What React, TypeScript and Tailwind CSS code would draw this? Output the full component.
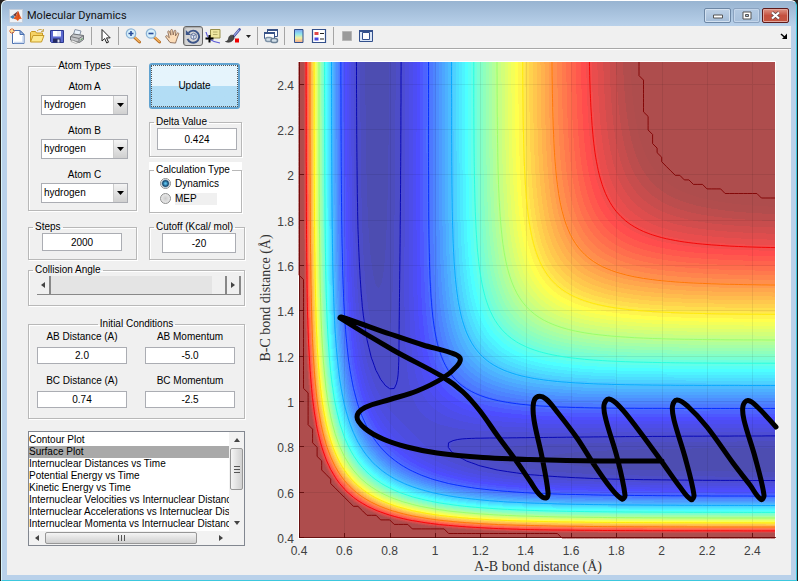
import React, { useMemo, useState } from 'react';

/* ---------- potential energy surface ---------- */

const DEPTH = 103.9;
const BETA = 1.96;
const R_EQ = 0.742;
const SATO = 0.182;
const CUTOFF = -21;
const FLOOR = -104;

const MIN = 0.4;
const MAX = 2.5;
const LEFT = 299;
const TOP = 62;
const SIZE = 476;

const terms = (r: number) => {
  const e = Math.exp(-BETA * (r - R_EQ));
  const q = (DEPTH / 4) * ((3 + SATO) * e * e - (2 + 6 * SATO) * e);
  const j = (DEPTH / 4) * ((1 + 3 * SATO) * e * e - (6 + 2 * SATO) * e);
  return [q, j];
};

// LEPS energy of the collinear system, clipped at the cutoff
const energy = (ab: number, bc: number) => {
  const [q1, j1] = terms(ab);
  const [q2, j2] = terms(bc);
  const [q3, j3] = terms(ab + bc);
  const root = Math.sqrt(0.5 * ((j1 - j2) ** 2 + (j2 - j3) ** 2 + (j3 - j1) ** 2));
  return Math.min(CUTOFF, (q1 + q2 + q3 - root) / (1 + SATO));
};

const clamp = (v: number) => Math.max(0, Math.min(1, v));

const jet = (t: number, alpha: number) => {
  const mix = (v: number) => Math.round(255 * (clamp(v) * alpha + 1 - alpha));
  const r = mix(1.5 - Math.abs(4 * t - 3));
  const g = mix(1.5 - Math.abs(4 * t - 2));
  const b = mix(1.5 - Math.abs(4 * t - 1));
  return `rgb(${r},${g},${b})`;
};

const SHADES = 64;

const px = (v: number) => LEFT + ((v - MIN) / (MAX - MIN)) * SIZE;
const py = (v: number) => TOP + SIZE - ((v - MIN) / (MAX - MIN)) * SIZE;

// one path per shade, made of horizontal runs
const buildSurface = () => {
  const paths: string[] = Array(SHADES).fill('');
  const step = (MAX - MIN) / SIZE;
  for (let row = 0; row < SIZE; row++) {
    const bc = MAX - (row + 0.5) * step;
    let start = 0;
    let current = -1;
    for (let col = 0; col <= SIZE; col++) {
      let shade = -2;
      if (col < SIZE) {
        const t = (energy(MIN + (col + 0.5) * step, bc) - FLOOR) / (CUTOFF - FLOOR);
        shade = Math.max(0, Math.min(SHADES - 1, Math.floor(t * SHADES)));
      }
      if (shade !== current) {
        if (current >= 0) paths[current] += `M${LEFT + start} ${TOP + row}h${col - start}v1h${start - col}z`;
        start = col;
        current = shade;
      }
    }
  }
  return paths;
};

const LEVELS = [-100, -90.2, -80.2, -70.3, -60.4, -50.5, -40.7, -30.6, CUTOFF];

// marching squares on a 0.02 grid
const buildContour = (level: number) => {
  const n = 105;
  const at = (i: number) => MIN + i * 0.02;
  const grid = Array.from({ length: n + 1 }, (_, i) =>
    Array.from({ length: n + 1 }, (_, k) => energy(at(i), at(k)))
  );
  let d = '';
  for (let i = 0; i < n; i++) {
    for (let k = 0; k < n; k++) {
      const corners = [[i, k], [i + 1, k], [i + 1, k + 1], [i, k + 1]];
      const hits: string[] = [];
      corners.forEach(([ax, ay], c) => {
        const [bx, by] = corners[(c + 1) % 4];
        const a = grid[ax][ay];
        const b = grid[bx][by];
        if (a >= level !== b >= level) {
          const t = (level - a) / (b - a);
          hits.push(`${px(at(ax + (bx - ax) * t)).toFixed(1)} ${py(at(ay + (by - ay) * t)).toFixed(1)}`);
        }
      });
      for (let h = 0; h + 1 < hits.length; h += 2) d += `M${hits[h]}L${hits[h + 1]}`;
    }
  }
  return d;
};

const TRAJECTORY = [
  [662, 461], [600, 461], [530, 459.5], [483, 457.5], [437, 453], [407, 447], [383, 439], [365, 428.5],
  [357, 417], [365, 407.5], [390, 399.5], [417, 391], [443, 378], [457, 366], [460, 358], [450, 352.5],
  [423, 345], [390, 334], [341, 317], [340, 318], [393, 350], [443, 377], [463, 392], [480, 411],
  [497, 435], [517, 462], [530, 481], [539, 494], [546, 498], [548, 492], [542, 457], [534, 420],
  [533.5, 403], [538, 396.5], [546, 399], [558, 413], [577, 438], [593, 463], [610, 487], [622, 499],
  [625, 495], [617, 457], [606, 420], [604, 405], [609, 399], [620, 407], [637, 428], [662, 462],
  [680, 487], [691, 499.5], [694, 495], [685, 457], [674, 420], [672.5, 406], [677, 400], [688, 406.5],
  [707, 427], [733, 463], [750, 485], [761, 499.5], [764, 495], [755, 457], [744, 420], [743, 406],
  [748, 400.5], [758, 407.5], [776, 427]
];

const smooth = (pts: number[][]) => {
  let d = `M${pts[0][0]} ${pts[0][1]}`;
  for (let i = 0; i < pts.length - 1; i++) {
    const p0 = pts[i - 1] || pts[i];
    const p1 = pts[i];
    const p2 = pts[i + 1];
    const p3 = pts[i + 2] || p2;
    const len = Math.hypot(p2[0] - p1[0], p2[1] - p1[1]);
    const tangent = (a: number[], b: number[]) => {
      const l = Math.hypot(b[0] - a[0], b[1] - a[1]) || 1;
      return [((b[0] - a[0]) / l) * len / 3, ((b[1] - a[1]) / l) * len / 3];
    };
    const t1 = tangent(p0, p2);
    const t2 = tangent(p1, p3);
    d += `C${p1[0] + t1[0]} ${p1[1] + t1[1]} ${p2[0] - t2[0]} ${p2[1] - t2[1]} ${p2[0]} ${p2[1]}`;
  }
  return d;
};

const TICKS = [0.4, 0.6, 0.8, 1, 1.2, 1.4, 1.6, 1.8, 2, 2.2, 2.4];

const SurfacePlot = () => {
  const surface = useMemo(buildSurface, []);
  const contours = useMemo(() => LEVELS.map(buildContour), []);
  const track = useMemo(() => smooth(TRAJECTORY), []);

  return (
    <svg viewBox="253 49 538 526" className="block w-full h-auto" role="img" aria-label="Surface Plot">
      <rect x={LEFT - 1} y={TOP - 1} width={SIZE + 2} height={SIZE + 2} fill="#fff" />
      <g shapeRendering="crispEdges">
        {surface.map((d, i) => (
          <path key={i} d={d} fill={jet(Math.min(0.988, (i + 1) / SHADES), 0.7)} />
        ))}
        {TICKS.map((t) => (
          <path
            key={t}
            d={`M${Math.round(px(t)) + 0.5} ${TOP}v${SIZE}M${LEFT} ${Math.round(py(t)) - 0.5}h${SIZE}`}
            stroke="#000"
            strokeOpacity="0.07"
          />
        ))}
        <path d={`M${LEFT + 0.5} ${TOP}v${SIZE - 0.5}h${SIZE}`} fill="none" stroke="#500" strokeOpacity="0.75" />
        {TICKS.map((t) => (
          <path
            key={t}
            d={`M${Math.round(px(t)) + 0.5} ${TOP + SIZE}v-5M${LEFT} ${Math.round(py(t)) - 0.5}h5`}
            stroke="#500"
            strokeOpacity="0.75"
          />
        ))}
      </g>
      {contours.map((d, i) => (
        <path
          key={i}
          d={d}
          fill="none"
          stroke={jet((LEVELS[i] - FLOOR) / (CUTOFF - FLOOR), 1)}
          strokeOpacity="0.9"
          strokeWidth="1"
        />
      ))}
      <path d={track} fill="none" stroke="#000" strokeWidth="5" strokeLinejoin="round" strokeLinecap="round" />
      <g className="font-['Liberation_Sans',sans-serif] text-[12px]" fill="#404040">
        {TICKS.map((t) => (
          <React.Fragment key={t}>
            <text x={px(t)} y="555" textAnchor="middle">{t}</text>
            <text x="294" y={py(t) + 5} textAnchor="end">{t}</text>
          </React.Fragment>
        ))}
      </g>
      <g className="font-['Liberation_Serif',serif] text-[14px]" fill="#333" textAnchor="middle">
        <text x="538" y="571">A-B bond distance (Å)</text>
        <text transform="translate(270 298) rotate(-90)">B-C bond distance (Å)</text>
      </g>
    </svg>
  );
};

/* ---------- toolbar ---------- */

const Lens = ({ plus }: { plus?: boolean }) => (
  <>
    <path d="M9.500 9.500l5 4.500" stroke="#b8702a" strokeWidth="3" strokeLinecap="round" />
    <path d="M9.800 9.300l4.500 4.200" stroke="#f6b35c" strokeWidth="1.500" strokeLinecap="round" />
    <circle cx="6" cy="5.500" r="4.700" fill="#d8f0fb" stroke="#8db4d6" strokeWidth="1.300" />
    <path d={plus ? 'M3.500 5.500h5M6 3v5' : 'M3.500 5.500h5'} stroke="#2a4d9a" strokeWidth="1.600" />
  </>
);

const icons: Record<string, React.ReactNode> = {
  new: (
    <>
      <path d="M3.500 2.500h7.500l4 4v9h-11.500z" fill="#fff" stroke="#4a6fae" />
      <path d="M5 14.500h9V8" fill="none" stroke="#c9d9f2" strokeWidth="1.500" />
      <path d="M11 2.500v4h4z" fill="#9db9e4" stroke="#4a6fae" />
      <path d="M3 0v6M0 3h6M1 1l4 4M5 1l-4 4" stroke="#d9682c" />
      <circle cx="3" cy="3" r="1.300" fill="#ffe08a" />
    </>
  ),
  open: (
    <>
      <path d="M1.500 13.500v-9l1-1h4l1 1.500h6v3" fill="#f6d365" stroke="#c79a26" />
      <path d="M8 3c2-2 4-2 6-.5M14.500 1v2.500h-2.500" fill="none" stroke="#c8a95a" />
      <path d="M1.500 14l2.500-6.500h11l-2.500 6.500z" fill="#fde98f" stroke="#c79a26" />
    </>
  ),
  save: (
    <>
      <path d="M1.500 2.500h13v12h-12l-1-1z" fill="#5a68cf" stroke="#2c388f" />
      <path d="M4 3h8v5.500h-8z" fill="#e6ebfb" />
      <path d="M4 3h4v5h-4z" fill="#fff" />
      <path d="M4 10.500h7.500v4h-7.500z" fill="#23295f" />
      <path d="M8.500 11.500h2v3h-2z" fill="#dfe3f5" />
    </>
  ),
  print: (
    <>
      <path d="M6 1.500l6 1.500-1.500 5-6-1.500z" fill="#e9f2fc" stroke="#8794a6" />
      <path d="M1.500 8.500l3-2.500 10 1.500v4l-4 3-9-2.500z" fill="#c3c5c8" stroke="#6c7074" />
      <path d="M1.500 8.500l8.500 2v4M10 10.500l4.500-3" fill="none" stroke="#77797c" />
      <path d="M3 12l6 2.500-2 1-5-2z" fill="#f7f7f7" stroke="#888" strokeWidth=".6" />
      <path d="M11.500 12l2-1.500" stroke="#4fa34a" />
    </>
  ),
  pointer: (
    <path d="M5 1.500v11.500l2.700-2.500 2 4.500 1.800-.8-2-4.300h3.700z" fill="#fff" stroke="#222" />
  ),
  zoomIn: <Lens plus />,
  zoomOut: <Lens />,
  hand: (
    <path
      d="M5 14.500l-4.200-5.500c-.6-1.200.8-1.800 1.700-.9l1.800 1.700-1.500-5.800c-.2-1.300 1.400-1.500 1.800-.3l1.300 3.500-.2-4.700c0-1.300 1.700-1.400 1.900-.1l.6 4.600 1-4c.4-1.200 1.900-.8 1.700.4l-.5 4.600 1.700-2.700c.7-1 2-.3 1.600.8l-1.900 5-1.300 4z"
      fill="#fbdcb8"
      stroke="#8a6a55"
      strokeWidth=".9"
    />
  ),
  rotate: (
    <>
      <path d="M3.500 4.800a6 6 0 1 1-1 6" fill="none" stroke="#3b5488" strokeWidth="1.900" />
      <path d="M.8 2v5h5z" fill="#3b5488" />
      <path d="M6 6.500l2.500-1.300 2.700 1.300v3.500l-2.700 1.500-2.500-1.500zM6 6.500l2.700 1.200 2.500-1.200M8.700 7.700v3.500" fill="#e8edf8" stroke="#5a6f9c" strokeWidth=".9" />
    </>
  ),
  cursor: (
    <>
      <path d="M1 4c1 6 6 10 14 11" fill="none" stroke="#5a5ad8" strokeWidth="1.200" />
      <path d="M5.500 1.500h9.500v8.500h-9.500z" fill="#efe7a0" stroke="#98904c" />
      <path d="M8 4h4.500M8 6.500h4.500" stroke="#b5ad6a" />
      <path d="M.5 10.500h8M4.500 7v7.500" stroke="#000" strokeWidth="2" />
    </>
  ),
  brush: (
    <>
      <path d="M14.500 1.500l-6 7" stroke="#3e4a9c" strokeWidth="2.600" strokeLinecap="round" />
      <path d="M14.300 1.600l-5.500 6.400" stroke="#a9b2ec" strokeWidth="1.100" />
      <path d="M8.500 7.500c-3-1-4.500.5-5 3-.3 2-1.500 3-3 3 3 1.500 7 .5 8.500-3z" fill="#4c4c4c" stroke="#222" strokeWidth=".6" />
      <path d="M10 10.500h4v4h-4z" fill="#f00000" />
    </>
  ),
  link: (
    <>
      <path d="M4.500 1.500h10v7h-10z" fill="#fff" stroke="#3a5488" />
      <path d="M4 2h11" stroke="#3a5488" strokeWidth="2" />
      <path d="M1.500 4.500h10v6h-10z" fill="#fff" stroke="#3a5488" />
      <path d="M1 5h11" stroke="#3a5488" strokeWidth="2" />
      <rect x="2.500" y="9.500" width="6.500" height="4" rx="2" fill="#d3e0ea" stroke="#7f93a8" strokeWidth="1.500" />
      <rect x="8" y="10.500" width="6.500" height="4" rx="2" fill="#d3e0ea" stroke="#6c8196" strokeWidth="1.500" />
    </>
  ),
  colorbar: (
    <>
      <linearGradient id="bar" x1="0" y1="0" x2="0" y2="1">
        <stop offset="0" stopColor="#7fa4f2" />
        <stop offset=".35" stopColor="#8fe6ee" />
        <stop offset=".65" stopColor="#f3f0a0" />
        <stop offset="1" stopColor="#f3a88a" />
      </linearGradient>
      <path d="M3.500 1.500h8.500v13h-8.500z" fill="url(#bar)" stroke="#33508c" />
    </>
  ),
  legend: (
    <>
      <path d="M1.500 1.500h13v13h-13z" fill="#fff" stroke="#33508c" strokeWidth="1.200" />
      <path d="M3.500 4h4v3h-4z" fill="#e24848" />
      <path d="M3.500 9.500h4v3h-4z" fill="#4848e2" />
      <path d="M9 5.500h4M9 11h4" stroke="#222" />
    </>
  ),
  hide: <path d="M3.500 3.500h9v9h-9z" fill="#9a9a9a" stroke="#b5b5b5" />,
  dock: (
    <>
      <path d="M1.500 2.500h13v11h-13z" fill="#dbe6f7" stroke="#33508c" />
      <path d="M1 3h14" stroke="#33508c" strokeWidth="2" />
      <path d="M4.500 4.500h7v7h-7z" fill="#fff" stroke="#33508c" />
    </>
  )
};

const Icon = ({ name }: { name: string }) => (
  <svg viewBox="0 0 16 16" className="w-4 h-4 shrink-0" fill="none" aria-hidden="true">{icons[name]}</svg>
);

const Tool = ({ name, narrow, active }: { name: string; narrow?: boolean; active?: boolean }) => (
  <button
    aria-label={name}
    className={`h-5 flex items-center justify-center ${narrow ? 'w-[18px]' : 'w-5'} ${
      active ? 'border border-[#666] rounded-[3px] bg-[#d5d5d5] shadow-[inset_1px_1px_1px_#aaa]' : ''
    }`}
  >
    <Icon name={name} />
  </button>
);

const Separator = () => <div className="w-px h-[18px] mx-1 bg-[#a5a5a5]" />;

const Toolbar = () => (
  <div className="flex items-center h-[23px] pb-0.5 border-b border-[#a8a8a8] shadow-[0_1px_0_#fff]">
    {['new', 'open', 'save', 'print'].map((n) => <Tool key={n} name={n} />)}
    <Separator />
    <Tool name="pointer" narrow />
    <Separator />
    {['zoomIn', 'zoomOut', 'hand', 'rotate', 'cursor', 'brush'].map((n) => (
      <Tool key={n} name={n} active={n === 'rotate'} />
    ))}
    <button aria-label="brush colours" className="w-2.5 h-5 flex items-center justify-center">
      <svg viewBox="0 0 5 3" className="w-[5px] h-[3px]"><path d="M0 0h5L2.500 3z" fill="#222" /></svg>
    </button>
    <Separator />
    <Tool name="link" narrow />
    <Separator />
    <Tool name="colorbar" />
    <Tool name="legend" />
    <Separator />
    <Tool name="hide" narrow />
    <Tool name="dock" />
    <button aria-label="dock figure" className="ml-auto mr-[3px]">
      <svg viewBox="0 0 8 8" className="w-2 h-2">
        <path d="M1 2l4 3.500" stroke="#000" strokeWidth="1.500" />
        <path d="M7 1.500V7H2z" fill="#000" />
      </svg>
    </button>
  </div>
);

/* ---------- window chrome ---------- */

const TitleBar = () => (
  <div className="flex items-start h-[25px] pl-[5px] pr-[7px]">
    <div className="w-[14px] h-[14px] mt-2 ml-0.5 bg-[#eef1f5] border border-[#c4cedb]">
      <svg viewBox="0 0 12 12" className="w-3 h-3">
        <path d="M0 7l3-2 2 2-2 2z" fill="#3f7fb5" />
        <path d="M3 5l2.500-2L8 1 5.500 6.500z" fill="#6b3a3a" />
        <path d="M8 1c1 1 2 5.500 4 8-2-.8-3 0-4 2-1-1-2-2.500-4.500-2L5 6.500C6.500 6 7 2.500 8 1z" fill="#e2571e" />
        <path d="M8 1c.5 2 .5 5 0 7z" fill="#a3261a" />
      </svg>
    </div>
    <h1 className="ml-1 mt-[7px] text-[11px] leading-4 text-[#111] font-[Roboto,sans-serif]">Molecular Dynamics</h1>
    <div className="ml-auto mt-[7px] flex gap-0.5">
      <button aria-label="Minimize" className="w-[27px] h-[15px] rounded-[2px] border border-[#6d87a5] shadow-[inset_0_0_0_1px_#d3e1f0] bg-linear-to-b from-[#bfd2e7] to-[#a3bcd8] flex items-center justify-center">
        <svg viewBox="0 0 10 5" className="w-2.5 h-[5px] mt-0.5"><path d="M.5 1h9v3h-9z" fill="#fff" stroke="#555" /></svg>
      </button>
      <button aria-label="Maximize" className="w-[27px] h-[15px] rounded-[2px] border border-[#8ba3c0] shadow-[inset_0_0_0_1px_#c3d5ea] bg-linear-to-b from-[#b4cae2] to-[#a7c0dc] flex items-center justify-center">
        <svg viewBox="0 0 10 9" className="w-2.5 h-[9px]">
          <path d="M1 1h8v7H1z" fill="#fff" stroke="#555" />
          <path d="M3.500 3.500h3v2h-3z" fill="#a7c0dc" stroke="#555" />
        </svg>
      </button>
      <button aria-label="Close" className="w-[27px] h-[15px] rounded-[2px] border border-[#5e1a1a] shadow-[inset_0_0_0_1px_#e3a79d] bg-linear-to-b from-[#dd9486] via-[#c5503f] to-[#c4553f] flex items-center justify-center">
        <svg viewBox="0 0 11 9" className="w-[11px] h-[9px]">
          <path d="M2 1.500l7 6M9 1.500l-7 6" stroke="#5b4444" strokeWidth="3.600" />
          <path d="M2 1.500l7 6M9 1.500l-7 6" stroke="#fff" strokeWidth="2.200" />
        </svg>
      </button>
    </div>
  </div>
);

/* ---------- controls ---------- */

type GroupProps = { label: string; className?: string; center?: boolean; children: React.ReactNode };

const Group = ({ label, className = '', center, children }: GroupProps) => (
  <fieldset className={`min-w-0 border border-[#b8b8b8] shadow-[1px_1px_0_#fff,inset_1px_1px_0_#fff] ${className}`}>
    <legend className={`px-0.5 leading-3 whitespace-nowrap ${center ? 'mx-auto' : 'ml-1'}`}>{label}</legend>
    {children}
  </fieldset>
);

const field = 'block bg-white border border-[#abadb3] text-center outline-none';

const NumberField = ({ label, initial }: { label: string; initial: string }) => {
  const [value, setValue] = useState(initial);
  return (
    <label className="flex flex-col gap-1 text-center">
      <span>{label}</span>
      <input className={`${field} w-full h-[17px]`} value={value} onChange={(e) => setValue(e.target.value)} />
    </label>
  );
};

const AtomSelect = ({ label }: { label: string }) => (
  <label className="flex flex-col gap-0.5 text-center">
    <span>{label}</span>
    <span className="relative block">
      <select className="appearance-none block w-full h-5 pl-0.5 bg-white border border-[#abadb3] text-left outline-none">
        <option>hydrogen</option>
        <option>deuterium</option>
        <option>fluorine</option>
        <option>chlorine</option>
      </select>
      <span className="absolute right-px inset-y-px w-[14px] border-l border-[#ccc] bg-linear-to-b from-[#f4f4f4] to-[#d0d0d0] flex items-center justify-center pointer-events-none">
        <svg viewBox="0 0 7 4" className="w-[7px] h-1"><path d="M0 0h7L3.500 4z" fill="#000" /></svg>
      </span>
    </span>
  </label>
);

const modes = ['Dynamics', 'MEP'];

const ModePicker = () => {
  const [mode, setMode] = useState('Dynamics');
  return (
    <div className="mt-[5px] mr-[3px] pt-0.5 bg-white">
      <Group label="Calculation Type" className="h-[49px]">
        {modes.map((m) => (
          <label key={m} className="flex items-center gap-1 h-[15px] pl-2.5">
            <input
              type="radio"
              name="mode"
              checked={mode === m}
              onChange={() => setMode(m)}
              className="appearance-none shrink-0 w-[11px] h-[11px] rounded-full border border-[#8e8f8f] bg-radial from-[#ccc] to-[#f4f4f4] checked:from-[#5fc3ee] checked:from-10% checked:via-[#124a72] checked:via-45% checked:to-white checked:to-70%"
            />
            <span className={m === 'MEP' ? 'w-[42px] bg-[#f0f0f0]' : ''}>{m}</span>
          </label>
        ))}
      </Group>
    </div>
  );
};

const Arrow = ({ turn = '' }: { turn?: string }) => (
  <svg viewBox="0 0 6 4" className={`w-1.5 h-1 ${turn}`}><path d="M0 4h6L3 0z" fill="#444" /></svg>
);

const bevel = 'w-[14px] shrink-0 flex items-center justify-center bg-[#f0f0f0] border-r-2 border-[#888]';

const AngleSlider = () => {
  const [angle, setAngle] = useState(180);
  return (
    <div className="flex h-[19px] ml-2 mr-[3px] border-b border-[#888]">
      <button aria-label="Decrease angle" className={bevel} onClick={() => setAngle(Math.max(0, angle - 5))}>
        <Arrow turn="-rotate-90" />
      </button>
      <input
        type="range"
        aria-label="Collision Angle"
        min={0}
        max={180}
        value={angle}
        onChange={(e) => setAngle(Number(e.target.value))}
        className="appearance-none flex-1 min-w-0 h-[18px] bg-[#e4e4e4] [&::-webkit-slider-thumb]:appearance-none [&::-webkit-slider-thumb]:w-[15px] [&::-webkit-slider-thumb]:h-[18px] [&::-webkit-slider-thumb]:bg-[#f0f0f0] [&::-webkit-slider-thumb]:border-r-2 [&::-webkit-slider-thumb]:border-[#888]"
      />
      <button aria-label="Increase angle" className={bevel} onClick={() => setAngle(Math.min(180, angle + 5))}>
        <Arrow turn="rotate-90" />
      </button>
    </div>
  );
};

const plots = [
  'Contour Plot',
  'Surface Plot',
  'Internuclear Distances vs Time',
  'Potential Energy vs Time',
  'Kinetic Energy vs Time',
  'Internuclear Velocities vs Internuclear Distance',
  'Internuclear Accelerations vs Internuclear Distance',
  'Internuclear Momenta vs Internuclear Distance'
];

const PlotList = () => {
  const [plot, setPlot] = useState('Surface Plot');
  return (
    <div className="mt-3 border border-[#828790] bg-white">
      <div className="flex h-[99px]">
        <select
          size={8}
          aria-label="Plot type"
          value={plot}
          onChange={(e) => setPlot(e.target.value)}
          className="appearance-none flex-1 min-w-0 h-[99px] py-0.5 overflow-hidden outline-none bg-white"
        >
          {plots.map((p) => (
            <option
              key={p}
              className="h-3 min-h-0 p-0 leading-3 text-black checked:text-black checked:bg-[linear-gradient(#a9a9a9,#a9a9a9)]"
            >
              {p}
            </option>
          ))}
        </select>
        <div className="w-[15px] flex flex-col items-center bg-[#f2f2f2]">
          <button aria-label="Scroll up" className="h-4 flex items-center"><Arrow /></button>
          <div className="w-[13px] h-[42px] border border-[#979797] rounded-[2px] bg-linear-to-r from-[#f5f5f5] to-[#d0d0d0] flex flex-col gap-0.5 items-center justify-center">
            <i className="w-1.5 h-px bg-[#555]" />
            <i className="w-1.5 h-px bg-[#555]" />
            <i className="w-1.5 h-px bg-[#555]" />
          </div>
          <button aria-label="Scroll down" className="h-4 mt-auto flex items-center"><Arrow turn="rotate-180" /></button>
        </div>
      </div>
      <div className="flex items-center h-[14px] bg-[#f2f2f2]">
        <button aria-label="Scroll left" className="w-4 h-3 flex items-center justify-center"><Arrow turn="-rotate-90" /></button>
        <div className="w-[152px] h-3 border border-[#979797] rounded-[2px] bg-linear-to-b from-[#f5f5f5] to-[#d0d0d0] flex gap-0.5 items-center justify-center">
          <i className="w-px h-1.5 bg-[#555]" />
          <i className="w-px h-1.5 bg-[#555]" />
          <i className="w-px h-1.5 bg-[#555]" />
        </div>
        <button aria-label="Scroll right" className="w-4 h-3 ml-auto mr-[15px] flex items-center justify-center"><Arrow turn="rotate-90" /></button>
      </div>
    </div>
  );
};

const Controls = () => (
  <form className="w-[217px] shrink-0 pt-[11px] text-[10px] leading-3 text-black font-['Liberation_Sans',Arial,sans-serif]" onSubmit={(e) => e.preventDefault()}>
    <div className="flex gap-3">
      <div className="w-[109px]">
        <Group label="Atom Types" center className="h-[151px] pt-[9px] pl-3 pr-2 flex flex-col">
          <div className="flex flex-col gap-2.5">
            <AtomSelect label="Atom A" />
            <AtomSelect label="Atom B" />
            <AtomSelect label="Atom C" />
          </div>
        </Group>
        <Group label="Steps" className="mt-2.5 h-[39px]">
          <input aria-label="Steps" defaultValue="2000" className={`${field} ml-[13px] w-20 h-[18px]`} />
        </Group>
      </div>
      <div className="flex-1 min-w-0">
        <button className="block mt-[3px] w-[91px] h-[46px] rounded-[3px] border-2 border-[#62a3d0] bg-linear-to-b from-[#e5f4fc] from-50% to-[#b2ddf5] to-50%">
          <span className="flex items-center justify-center h-full border border-dotted border-[#555]">Update</span>
        </button>
        <Group label="Delta Value" className="mt-[7px] mr-[3px] h-[41px]">
          <input aria-label="Delta Value" defaultValue="0.424" className={`${field} ml-[7px] w-20 h-[22px]`} />
        </Group>
        <ModePicker />
        <Group label="Cutoff (Kcal/ mol)" className="mt-2 h-[39px]">
          <input aria-label="Cutoff" defaultValue="-20" className={`${field} ml-3 w-[74px] h-5`} />
        </Group>
      </div>
    </div>
    <Group label="Collision Angle" className="mt-1 h-[42px]">
      <AngleSlider />
    </Group>
    <Group label="Initial Conditions" center className="mt-3 h-[101px]">
      <div className="grid grid-cols-2 gap-x-[18px] gap-y-[11px] pl-2 pr-[9px] pt-px">
        <NumberField label="AB Distance (A)" initial="2.0" />
        <NumberField label="AB Momentum" initial="-5.0" />
        <NumberField label="BC Distance (A)" initial="0.74" />
        <NumberField label="BC Momentum" initial="-2.5" />
      </div>
    </Group>
    <PlotList />
  </form>
);

const App = () => (
  <div className="flex bg-[#26221f]">
    <div className="flex-1 min-w-0 ml-px mr-px border border-t-white border-l-[#d9f4fb] border-r-[#3cc8de] border-b-[#3cc8de] rounded-t-md bg-[#b9d1ea] bg-[linear-gradient(#98b4d1,#b9d1ea_25px)] pb-[5px]">
      <TitleBar />
      <main className="mx-[5px] bg-[#f0f0f0]">
        <Toolbar />
        <div className="flex pl-[21px]">
          <Controls />
          <div className="flex-1 min-w-0 pl-2">
            <SurfacePlot />
          </div>
        </div>
      </main>
    </div>
    <div className="w-0.5 bg-white" />
  </div>
);

export default App;
